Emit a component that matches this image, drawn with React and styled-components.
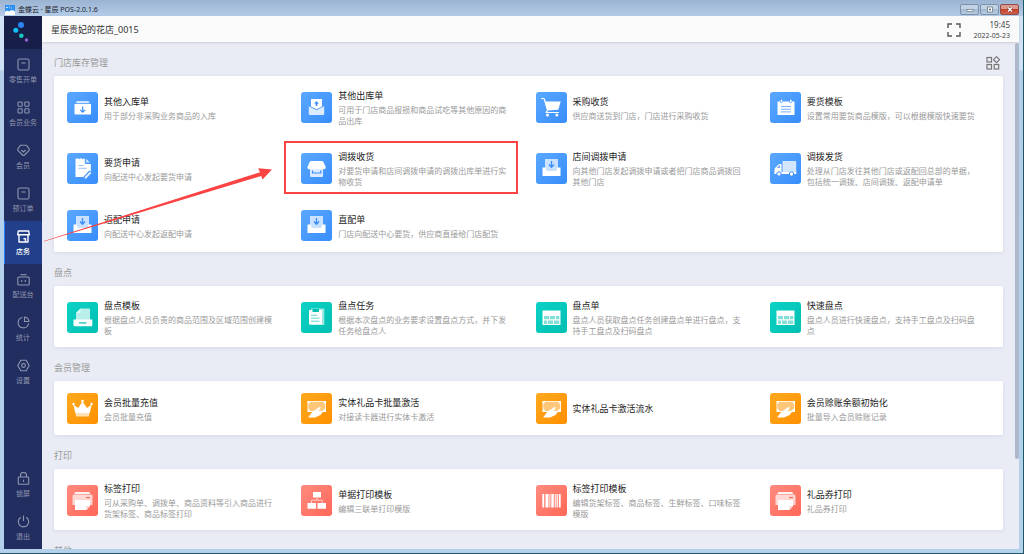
import React from "react";
import styled, { createGlobalStyle, css } from "styled-components";

const GlobalStyle = createGlobalStyle`
  *, *::before, *::after { box-sizing: border-box; }
  body {
    margin: 0;
    font-family: "Noto Sans", "Noto Sans CJK SC", sans-serif;
    color: #333;
  }
  button {
    margin: 0;
    padding: 0;
    border: 0;
    background: none;
    font: inherit;
    color: inherit;
    cursor: pointer;
  }
  h1, h2, h3, p, ul { margin: 0; padding: 0; font-weight: 400; }
  svg { display: block; flex: none; }
`;

const Desktop = styled.div`
  height: 100vh;
  padding: 0 1px 1px 0;
  background: #1f5767;
`;

const Window = styled.div`
  display: flex;
  flex-direction: column;
  height: 100%;
  padding: 0 4px 4px 4px;
  background: linear-gradient(#d3e4f5 0, #cfe2f5 70px, #b3cee9 71px, #b3d1ea 100%);
  overflow: hidden;
`;

const TitleBar = styled.div`
  display: flex;
  flex: none;
  align-items: center;
  gap: 3px;
  height: 16px;
  margin: 0 -4px;
  padding: 3px 4px 0 5px;
  background: linear-gradient(#9bb4d2, #b4cce6);
`;

const WindowTitle = styled.h1`
  flex: 1;
  font-size: 7px;
  line-height: 10px;
  color: #1c232c;
`;

const WindowButtons = styled.div`
  display: flex;
  gap: 1px;
`;

const WindowButton = styled.button`
  display: grid;
  place-items: center;
  width: 19px;
  height: 11px;
  border: 1px solid ${(p) => (p.$close ? "#8d4b4b" : "#7c90aa")};
  border-radius: 2px;
  background: ${(p) =>
    p.$close
      ? "linear-gradient(#dc9a8c 45%, #c4422c 50%, #d0624a)"
      : "linear-gradient(#c3d3e6 45%, #a5bad3 50%, #b7cbe2)"};
`;

const Body = styled.div`
  display: flex;
  flex: 1;
  min-height: 0;
`;

const Sidebar = styled.nav`
  display: flex;
  flex: none;
  flex-direction: column;
  width: 38px;
  background: #232e60;
`;

const Logo = styled.div`
  display: grid;
  flex: none;
  place-items: center;
  height: 33px;
  background: #171f49;
`;

const NavButton = styled.button`
  display: flex;
  flex: none;
  flex-direction: column;
  align-items: center;
  gap: 4px;
  height: 43px;
  padding-top: 9px;
  font-size: 7px;
  line-height: 10px;
  color: #8f95af;
  ${(p) =>
    p.$active &&
    css`
      color: #fff;
      font-weight: 500;
      background: #213f8a;
      box-shadow: inset 1px 0 #2a7bff;
    `}
`;

const NavSpacer = styled.div`
  flex: 1;
`;

const Main = styled.main`
  position: relative;
  display: flex;
  flex: 1;
  flex-direction: column;
  min-width: 0;
  background: #e9ecf4;
`;

const Header = styled.header`
  display: flex;
  flex: none;
  align-items: center;
  height: 26px;
  padding: 2px 9px 0;
  background: #fafafa;
  box-shadow: 0 1px 2px rgba(60, 60, 60, 0.16);
`;

const ShopName = styled.h2`
  flex: 1;
  font-size: 9px;
  line-height: 14px;
`;

const Clock = styled.div`
  display: flex;
  flex-direction: column;
  align-items: flex-end;
  margin-left: 12px;
  font-size: 7px;
  line-height: 11px;
  color: #444;
`;

const Time = styled.time`
  font-size: 8px;
`;

const Scroller = styled.div`
  display: flex;
  flex: 1;
  min-height: 0;
  overflow: hidden;
`;

const Content = styled.div`
  flex: 1;
  min-width: 0;
  padding: 0 12px;
`;

const ScrollThumb = styled.div`
  width: 4px;
  height: 82%;
  margin-top: 1px;
  border-radius: 2px;
  background: #adb8ca;
`;

const SectionHead = styled.div`
  display: flex;
  align-items: center;
  justify-content: space-between;
  height: 34px;
  padding: 7px 3px 0 0;
`;

const SectionTitle = styled.h2`
  font-size: 9px;
  line-height: 14px;
  color: #999;
`;

const Card = styled.ul`
  display: grid;
  grid-template-columns: repeat(4, minmax(0, 1fr));
  padding: 0 6px;
  border-radius: 2px;
  background: #fff;
  box-shadow: 0 1px 4px rgba(70, 90, 150, 0.12);
  list-style: none;
`;

const Cell = styled.li`
  position: relative;
  display: grid;
  ${(p) =>
    p.$marked &&
    css`
      &::after {
        content: "";
        position: absolute;
        inset: 4px 11px 4px -10px;
        border: 2px solid #fa4343;
        pointer-events: none;
      }
    `}
`;

const Entry = styled.button`
  display: flex;
  align-items: center;
  gap: 6px;
  min-height: 54px;
  padding: 12px 16px 11px 7px;
  text-align: left;
`;

const TILE = {
  blue: ["#5aa8ff", "#388dfb"],
  teal: ["#0cd2c5", "#03bfb2"],
  orange: ["#ffa91f", "#ff9000"],
  red: ["#ff8b7f", "#ff6757"],
};

const Tile = styled.span`
  flex: none;
  width: 31px;
  height: 31px;
  border-radius: 3px;
  color: ${(p) => TILE[p.$tone][1]};
  background: linear-gradient(135deg, ${(p) => TILE[p.$tone].join(", ")});
`;

const EntryText = styled.span`
  display: flex;
  flex: 1;
  flex-direction: column;
  gap: 1px;
  min-width: 0;
`;

const EntryTitle = styled.span`
  font-size: 9px;
  line-height: 15px;
  color: #222;
`;

const EntryNote = styled.span`
  font-size: 8px;
  line-height: 11px;
  color: #999;
`;

const Arrow = styled.svg`
  position: absolute;
  top: 148px;
  left: 0;
  pointer-events: none;
`;

/* Tile drawings, on a 31 x 31 grid; currentColor is the tile's own colour. */
const Tray = (
  <>
    <path d="M9 6h13v12H9z" opacity=".7" />
    <path d="M6.500 14.500H10V16q0 2 2 2h7q2 0 2-2v-1.500h3.500V23h-18z" />
    <path d="M15.500 8v6M13 11.500l2.500 2.700 2.500-2.700" stroke="currentColor" strokeWidth="1.300" fill="none" />
  </>
);
const Sheet = (
  <>
    <path d="M6.500 8.500h18V23h-18z" />
    <g fill="currentColor" opacity=".5">
      <path d="M8 14h5v3.300H8zM14 14h5v3.300h-5zM20 14h3.300v3.300H20zM8 18.400h3v3.600H8zM12 18.400h5v3.600h-5zM18 18.400h5.300v3.600H18z" />
    </g>
  </>
);
const GiftCard = (
  <>
    <path d="M6.500 8H25v11H6.500z" />
    <path d="M9 8.800h13.500q0 2 1.700 2v5q-1.700 0-2.200 2.200H9q0-2-1.700-2.200v-5Q9 10.800 9 8.800z" fill="#ffc77a" />
    <path d="M7 24.500l4.500-5.800 6.500-4.400q2-1 1.600.8l-2 3 5.400-.6-3.500 4.500-5.500 2.500z" />
  </>
);
const Printer = (
  <>
    <path d="M8.500 7H22q1 0 1 2H7.500q0-2 1-2z" opacity=".9" />
    <path d="M7 9.500h17q1.500 0 1.500 1.500V20H5.500v-9Q5.500 9.500 7 9.500z" opacity=".7" />
    <path d="M19 12h4v1.200h-4z" fill="currentColor" />
    <path d="M8 15h15v6l-3.500 4H8z" />
    <path d="M19.500 25v-4H23z" fill="#ffd3ce" />
  </>
);
const TILE_ART = {
  inbox: (
    <>
      <path d="M10.500 9h10.500q1.500 0 1.500 2.300H9Q9 9 10.500 9z" opacity=".75" />
      <path d="M7.500 12h16.500v9.500q0 1-1 1h-14.500q-1 0-1-1z" />
      <path d="M15.700 14.500v5.500M13.300 17.800l2.400 2.400 2.400-2.400" stroke="currentColor" strokeWidth="1.200" fill="none" />
    </>
  ),
  outbox: (
    <>
      <path d="M10 7h11v9l-5.500 3-5.500-3z" />
      <path d="M7.800 13.500l7.700 4 7.700-4V22q0 1-1 1H8.800q-1 0-1-1z" fill="#dcebff" />
      <path d="M7.800 13.800l7.700 4 7.700-4" stroke="currentColor" strokeWidth=".8" fill="none" />
      <path d="M15.500 9l2.300 2.700h-1.500V14h-1.600v-2.300h-1.500z" fill="currentColor" />
    </>
  ),
  cart: (
    <>
      <path d="M5.500 6.500h1.700q1 0 1.300 1l3 10.500-1.200 2.500h12.200" fill="none" stroke="#fff" strokeWidth="1.200" strokeLinecap="round" />
      <path d="M8.700 9.500h16l-2.400 8.300-11 .8z" />
      <circle cx="11.500" cy="23" r="1.500" />
      <circle cx="20.800" cy="23" r="1.500" />
    </>
  ),
  calendar: (
    <>
      <path d="M7.500 9.500h2.800v1.200h2.200V9.500h7v1.200h2.200V9.500h2.800V23h-17z" />
      <path d="M10.700 7.700h1.500V10h-1.500zM20 7.700h1.500V10H20z" />
      <path d="M11 14.500h10M11 17.200h10M11 19.900h10" stroke="currentColor" strokeWidth="1" opacity=".7" />
    </>
  ),
  note: (
    <>
      <path d="M8.500 6l1.800-.7 1.800.7 1.900-.7 1.800.7 2-.5V10q0 1 1 1h5v7l-5.500 6H8.500z" />
      <path d="M19 5.700V9.500h4.200z" opacity=".7" />
      <path d="M11.500 12.500h5M11.500 15.300h8" stroke="currentColor" strokeWidth="1" opacity=".5" />
      <path d="M17.500 25l6-6.500" stroke="currentColor" strokeWidth="3.200" />
      <path d="M18 25.300l5.700-6" stroke="#e3f0ff" strokeWidth="2" />
    </>
  ),
  store: (
    <>
      <path d="M9 15h13v8q0 1-1 1H10q-1 0-1-1z" fill="#dcebff" />
      <path d="M10 8h11q.8 0 1.200.8l2.500 5q.3 2-1.500 2.500H8q-2-.5-1.500-2.500l2.300-5Q9.200 8 10 8z" />
      <path d="M11.500 17.500V20h8.300v-2.500" stroke="currentColor" strokeWidth="1.200" fill="none" />
    </>
  ),
  tray: Tray,
  truck: (
    <>
      <path d="M12.500 8h12.700q1 0 1 1v11.500H12.500z" fill="#d3e6ff" />
      <path d="M11.500 11v9.500h-7v-4q0-1 1-2l3-3q.4-.5 1-.5z" />
      <path d="M7 14.800l2.700-2.800v2.800z" fill="currentColor" />
      <path d="M4.500 19h21.700v2H4.500z" />
      <g stroke="currentColor" strokeWidth="1">
        <circle cx="9" cy="21" r="2.200" />
        <circle cx="21.500" cy="21" r="2.200" />
      </g>
    </>
  ),
  scanner: (
    <>
      <path d="M13.500 6.500H22q1 0 1 1V18H9v-7z" fill="#b9efeb" />
      <path d="M13.500 6.500V11H9z" fill="#fff" opacity=".7" />
      <path d="M6.500 17.500h18.800V23q0 1.200-1 1.200H7.500q-1 0-1-1.200z" />
      <path d="M12 20.300h7.500v1.200H12z" fill="currentColor" />
    </>
  ),
  clipboard: (
    <>
      <path d="M10 6.500h13.300V23H10z" opacity=".6" />
      <path d="M8 8h13v14.500H8z" />
      <path d="M11.500 7h6.500v3h-6.500z" fill="currentColor" />
      <path d="M10 13.300h6M10 16.200h8.500M10 19.200h8.500" stroke="currentColor" strokeWidth="1" opacity=".6" />
    </>
  ),
  sheet: Sheet,
  crown: (
    <>
      <path d="M6.300 11.500l4.800 3.500L15.500 8.500 20 15l4.700-3.500-2 8.500H8.300z" />
      <circle cx="15.500" cy="8" r="1.300" />
      <circle cx="6.500" cy="11" r="1.200" />
      <circle cx="24.500" cy="11" r="1.200" />
      <path d="M8.500 20h14l-.6 3.500H9z" fill="#ffe1b3" />
    </>
  ),
  gift: GiftCard,
  printer: Printer,
  diagram: (
    <>
      <path d="M12 7h8v5.500h-8zM6.500 18H15v5.700H6.500zM16.500 18H25v5.700h-8.500z" />
      <path d="M16 12.500v2.500M10.500 18v-2.800h10.700V18" stroke="#fff" strokeWidth=".8" fill="none" opacity=".8" />
    </>
  ),
  barcode: (
    <path d="M6.300 9h1.900v13.500H6.300zM9.500 9h3v13.500h-3zM13.400 9h1v13.500h-1zM15.300 9h2.500v13.500h-2.500zM18.700 9h1v13.500h-1zM20.500 9h1.300v13.500h-1.300zM22.800 9h1.900v13.500h-1.900z" />
  ),
};

const NAV_ART = {
  receipt: <><rect x="1" y="1" width="11" height="11" rx="1.500" /><path d="M4.500 5h4" /></>,
  grid: (
    <>
      <rect x="1" y="1" width="4.200" height="4.200" rx=".8" />
      <rect x="7.800" y="1" width="4.200" height="4.200" rx=".8" />
      <rect x="1" y="7.800" width="4.200" height="4.200" rx=".8" />
      <rect x="7.800" y="7.800" width="4.200" height="4.200" rx=".8" />
    </>
  ),
  gem: <><path d="M3.700 1.200h5.600l2.900 3.600v1.500L7.500 11q-1 1-2 0L.8 6.300V4.800z" /><path d="M4.300 6l2.200 2 2.200-2" /></>,
  shop: <><path d="M1.300 1h10.400l.6 3.800H.7zM2 5v7h9V5M.7 4.800h11.600M6.500 8.700h2V12" /></>,
  desk: <><path d="M3.500 1.700h6" /><rect x=".8" y="4" width="11.400" height="8" rx="1" /><path d="M4.700 7v2M8.300 7v2" /></>,
  pie: <><path d="M5.500 1.500a5.200 5.200 0 1 0 6 6" /><path d="M7.500 1a5 5 0 0 1 4.500 4.500H7.500z" /></>,
  gear: <><path d="M3.800 1.300h5.400l3 5.200-3 5.200H3.800l-3-5.200z" /><circle cx="6.500" cy="6.500" r="1.900" /></>,
  lock: <><rect x="1.300" y="5" width="10.400" height="7.300" rx=".5" /><path d="M3.500 5V3.500a3 3 0 0 1 6 0V5M6.500 7.700v2" /></>,
  power: <><path d="M3.700 2.300a5.200 5.200 0 1 0 5.600 0M6.500.5V6" /></>,
};

function NavItem({ icon, label, active }) {
  return (
    <NavButton type="button" $active={active} aria-current={active ? "page" : undefined}>
      <svg width="13" height="13" viewBox="0 0 13 13" fill="none" stroke="currentColor" strokeWidth={active ? 1.4 : 1.1} strokeLinejoin="round" aria-hidden="true">
        {NAV_ART[icon]}
      </svg>
      {label}
    </NavButton>
  );
}

const NAV = [
  ["receipt", "零售开单"],
  ["grid", "会员业务"],
  ["gem", "会员"],
  ["receipt", "预订单"],
  ["shop", "店务", true],
  ["desk", "配送台"],
  ["pie", "统计"],
  ["gear", "设置"],
];

const SECTIONS = [
  {
    title: "门店库存管理",
    tone: "blue",
    editable: true,
    items: [
      ["inbox", "其他入库单", "用于部分非采购业务商品的入库"],
      ["outbox", "其他出库单", "可用于门店商品报损和商品试吃等其他原因的商品出库"],
      ["cart", "采购收货", "供应商送货到门店，门店进行采购收货"],
      ["calendar", "要货模板", "设置常用要货商品模版，可以根据模版快速要货"],
      ["note", "要货申请", "向配送中心发起要货申请"],
      ["store", "调拨收货", "对要货申请和店间调拨申请的调拨出库单进行实物收货", true],
      ["tray", "店间调拨申请", "向其他门店发起调拨申请或者把门店商品调拨回其他门店"],
      ["truck", "调拨发货", "处理从门店发往其他门店或返配回总部的单据，包括统一调拨、店间调拨、返配申请单"],
      ["tray", "返配申请", "向配送中心发起返配申请"],
      ["tray", "直配单", "门店向配送中心要货，供应商直接给门店配货"],
    ],
  },
  {
    title: "盘点",
    tone: "teal",
    items: [
      ["scanner", "盘点模板", "根据盘点人员负责的商品范围及区域范围创建模板"],
      ["clipboard", "盘点任务", "根据本次盘点的业务要求设置盘点方式，并下发任务给盘点人"],
      ["sheet", "盘点单", "盘点人员获取盘点任务创建盘点单进行盘点，支持手工盘点及扫码盘点"],
      ["sheet", "快速盘点", "盘点人员进行快速盘点，支持手工盘点及扫码盘点"],
    ],
  },
  {
    title: "会员管理",
    tone: "orange",
    items: [
      ["crown", "会员批量充值", "会员批量充值"],
      ["gift", "实体礼品卡批量激活", "对接读卡器进行实体卡激活"],
      ["gift", "实体礼品卡激活流水", ""],
      ["gift", "会员赊账余额初始化", "批量导入会员赊账记录"],
    ],
  },
  {
    title: "打印",
    tone: "red",
    items: [
      ["printer", "标签打印", "可从采购单、调拨单、商品资料等引入商品进行货架标签、商品标签打印"],
      ["diagram", "单据打印模板", "编辑三联单打印模版"],
      ["barcode", "标签打印模板", "编辑货架标签、商品标签、生鲜标签、口味标签模版"],
      ["printer", "礼品券打印", "礼品券打印"],
    ],
  },
  { title: "其他", items: [] },
];

function Section({ title, tone, editable, items }) {
  return (
    <section>
      <SectionHead>
        <SectionTitle>{title}</SectionTitle>
        {editable && (
          <button type="button" aria-label="自定义">
            <svg width="14" height="14" viewBox="0 0 14 14" fill="none" stroke="#777" strokeWidth="1.200">
              <rect x="1" y="1.500" width="4.500" height="4.500" />
              <rect x="1" y="8.500" width="4.500" height="4.500" />
              <rect x="8.200" y="8.500" width="4.500" height="4.500" />
              <path d="M10.500.7l3 3-3 3-3-3z" />
            </svg>
          </button>
        )}
      </SectionHead>
      {items.length > 0 && (
        <Card>
          {items.map(([art, name, note, marked]) => (
            <Cell key={name} $marked={marked}>
              <Entry type="button">
                <Tile $tone={tone}>
                  <svg width="31" height="31" viewBox="0 0 31 31" fill="#fff" aria-hidden="true">
                    {TILE_ART[art]}
                  </svg>
                </Tile>
                <EntryText>
                  <EntryTitle>{name}</EntryTitle>
                  {note && <EntryNote>{note}</EntryNote>}
                </EntryText>
              </Entry>
            </Cell>
          ))}
        </Card>
      )}
    </section>
  );
}

export default function App() {
  return (
    <>
      <GlobalStyle />
      <Desktop>
        <Window>
          <TitleBar>
            <svg width="10" height="10" viewBox="0 0 10 10" aria-hidden="true">
              <path d="M0 0h10v10H0z" fill="#3190ee" />
              <path d="M0 7q2-2 4-.5Q7 4 10 6.500V10H0z" fill="#fff" />
              <path d="M1 2.500h2M4 2h1M6 3h1" stroke="#bfe0ff" />
            </svg>
            <WindowTitle>金蝶云 · 星辰 POS-2.0.1.6</WindowTitle>
            <WindowButtons>
              <WindowButton type="button" aria-label="最小化">
                <svg width="8" height="7" viewBox="0 0 8 7"><rect x="1" y="3.500" width="6" height="2" fill="#fff" stroke="#5b6776" strokeWidth=".6" /></svg>
              </WindowButton>
              <WindowButton type="button" aria-label="最大化">
                <svg width="8" height="7" viewBox="0 0 8 7"><rect x="1.500" y="1" width="5" height="5" fill="#fff" stroke="#5b6776" strokeWidth=".7" /><path d="M3 2.700h2v1.600H3z" fill="#5b6776" /></svg>
              </WindowButton>
              <WindowButton type="button" aria-label="关闭" $close>
                <svg width="8" height="7" viewBox="0 0 8 7"><path d="M2 1.500l4 4M6 1.500l-4 4" stroke="#6b3030" strokeWidth="2.400" /><path d="M2 1.500l4 4M6 1.500l-4 4" stroke="#fff" strokeWidth="1.400" /></svg>
              </WindowButton>
            </WindowButtons>
          </TitleBar>
          <Body>
            <Sidebar>
              <Logo>
                <svg width="20" height="24" viewBox="0 0 20 24" aria-hidden="true">
                  <circle cx="8" cy="4" r="3" fill="#2b84f0" />
                  <circle cx="2.800" cy="9.300" r="2.500" fill="#10bdf2" />
                  <circle cx="8.300" cy="14.800" r="2.300" fill="#1cc4c0" />
                  <circle cx="13.500" cy="19" r="1.700" fill="#9a63dc" />
                </svg>
              </Logo>
              {NAV.map(([icon, label, active]) => (
                <NavItem key={label} icon={icon} label={label} active={active} />
              ))}
              <NavSpacer />
              <NavItem icon="lock" label="锁屏" />
              <NavItem icon="power" label="退出" />
            </Sidebar>
            <Main>
              <Header>
                <ShopName>星辰贵妃的花店_0015</ShopName>
                <button type="button" aria-label="全屏">
                  <svg width="14" height="14" viewBox="0 0 14 14" fill="none" stroke="#555" strokeWidth="1.400">
                    <path d="M1 5V1h4M9 1h4v4M13 9v4H9M5 13H1V9" />
                  </svg>
                </button>
                <Clock>
                  <Time>19:45</Time>
                  <time>2022-05-23</time>
                </Clock>
              </Header>
              <Scroller>
                <Content>
                  {SECTIONS.map((s) => (
                    <Section key={s.title} {...s} />
                  ))}
                </Content>
                <ScrollThumb />
              </Scroller>
              <Arrow width="232" height="80" viewBox="0 0 232 80" aria-hidden="true">
                <path d="M2 77L218 8.300l-1.800-4L230 5.500l-9.500 10-1.300-3.500L2 77.600z" fill="#fa4343" />
              </Arrow>
            </Main>
          </Body>
        </Window>
      </Desktop>
    </>
  );
}
